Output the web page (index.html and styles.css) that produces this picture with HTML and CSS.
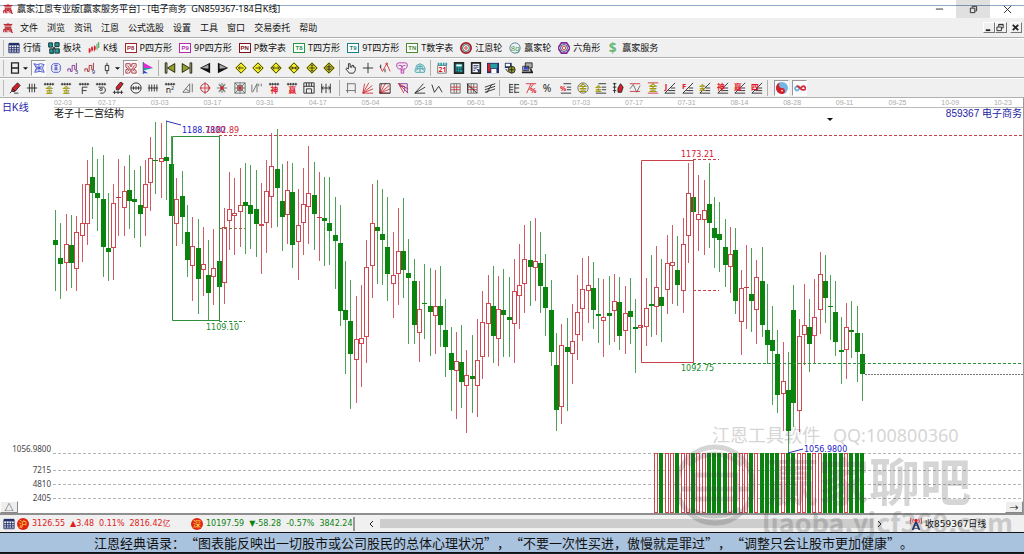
FILE: index.html
```html
<!DOCTYPE html>
<html lang="zh-CN">
<head>
<meta charset="utf-8">
<title>赢家江恩专业版</title>
<link rel="stylesheet" href="styles.css">
</head>
<body>
<svg class="defs" aria-hidden="true">
  <symbol id="logo" viewBox="0 0 14 14"><g class="red logo-lines"><path d="M1 2h12M7 0v2M2 4h10M3 6h8v2H3zM1 13V9h3v4M5.500 13V9h3v3M10 13V9h2v4h2M2 11h2"/></g></symbol>
  <symbol id="table" viewBox="0 0 14 14"><path class="f-white" d="M1 2h12v10H1z"/><path class="f-navy" d="M1 1h12v3H1z"/><path class="navy" d="M1 2v10.500h12V2M1 6.500h12M1 8.500h12M1 10.500h12M4 4v8M7 4v8M10 4v8"/></symbol>
  <symbol id="blocks" viewBox="0 0 14 14"><path class="f-teal" d="M0 1h6v5H0zM8 0h5v6H8zM2 8h5v6H2zM8 8h6v5H8z"/><path class="line" d="M1 1h4v5H1zM8 1h5v4H8zM2 8h4v5H2zM8 8h5v5H8zM6 6l3 3M9 5L5 9"/></symbol>
  <symbol id="kline" viewBox="0 0 14 14"><path class="red" d="M1.500 7v6M4.500 5v6M7.500 4v7"/><path class="f-red" d="M1 8h2v4H1zM4 6h2v4H4zM7 5h2v4H7z"/><path class="green" d="M10.500 2v7M12.500 0v7"/></symbol>
  <symbol id="wheel" viewBox="0 0 14 14"><circle class="maroon thick" cx="7" cy="7" r="6"/><circle class="darkgreen" cx="7" cy="7" r="4"/><circle class="red" cx="7" cy="7" r="1.500"/></symbol>
  <symbol id="wheel8" viewBox="0 0 14 14"><circle class="slate" cx="7" cy="7" r="6"/><text class="t-green" x="2" y="10" font-size="9">8g</text></symbol>
  <symbol id="hex" viewBox="0 0 14 14"><path class="purple thick" d="M4 1h6l4 6-4 6H4L0 7z"/><circle class="navy" cx="7" cy="7" r="4"/><circle class="red" cx="7" cy="7" r="2"/></symbol>
  <symbol id="dollar" viewBox="0 0 14 14"><text class="t-money" x="2" y="13" font-size="16">$</text></symbol>

  <symbol id="caret" viewBox="0 0 6 14"><path class="f-black" d="M0 6h6L3 9z"/></symbol>
  <symbol id="day" viewBox="0 0 14 14"><path class="line day-lines" d="M3 1h8v12H3zM3 7h8"/></symbol>
  <symbol id="web" viewBox="0 0 14 14"><path class="blue" d="M1 2l4 1 4-1 4 1-2 4 2 5-5-1-6 1 2-5zM3 4l8 6M11 4l-8 6M4 7h6M7 3v8"/></symbol>
  <symbol id="clip" viewBox="0 0 14 14"><path class="blue" d="M4 2h6l2 2v6l-2 2H4l-2-2V4zM5 4h4M5 7h4M5 9h4M7 4v5"/></symbol>
  <symbol id="step3" viewBox="0 0 14 14"><path class="purple" d="M1 11V8h3v3h2V4h3v5h2V1"/><text class="t-navy" x="9" y="14" font-size="7">3</text></symbol>
  <symbol id="step9" viewBox="0 0 14 14"><path class="maroon" d="M1 11V8h3v3h2V4h3v5h2V1"/><text class="t-navy" x="9" y="14" font-size="7">9</text></symbol>
  <symbol id="bar" viewBox="0 0 14 14"><path class="line" d="M5 4h4v6H5zM7 1v3M7 10v4"/></symbol>
  <symbol id="knot" viewBox="0 0 14 14"><path class="maroon" d="M1 2h5v3h2V2h5v4l-3 2 3 2v3H8V9H6v3l-2 1H1V9l3-1-3-2zM3 4l2 3M11 4L9 7M3 11l3-4M11 11L8 7"/></symbol>
  <symbol id="flag" viewBox="0 0 14 14"><path class="f-magenta" d="M2 1v6h11z"/><path class="f-teal" d="M2 7h11L2 10z"/><path class="f-blue" d="M2 10l5 3H2z"/><path class="navy" d="M1.500 0v14"/></symbol>
  <symbol id="first" viewBox="0 0 14 14"><path class="f-olive" d="M13 1v12L4 7zM1 1h2v12H1z"/><path class="line" d="M12.500 2v10L4 7zM1.500 1v12h2V1z"/></symbol>
  <symbol id="last" viewBox="0 0 14 14"><path class="f-olive" d="M1 1v12l9-6zM11 1h2v12h-2z"/><path class="line" d="M1.500 2v10L10 7zM10.500 1v12h2V1z"/></symbol>
  <symbol id="prev" viewBox="0 0 14 14"><path class="f-black" d="M13 1v12L1 7z"/><path class="f-gray" d="M11 3v5L3 7z"/></symbol>
  <symbol id="next" viewBox="0 0 14 14"><path class="f-black" d="M1 1v12l12-6z"/><path class="f-gray" d="M3 3v5l8-1z"/></symbol>
  <symbol id="dia" viewBox="0 0 14 14"><path class="f-yellow" d="M7 0l7 7-7 7-7-7z"/><path class="line" d="M7 1l6 6-6 6-6-6z"/></symbol>
  <symbol id="d1" viewBox="0 0 14 14"><use href="#dia"/><path class="line" d="M4 7h6M6 5L4 7l2 2"/></symbol>
  <symbol id="d2" viewBox="0 0 14 14"><use href="#dia"/><path class="line" d="M4 7h6M8 5l2 2-2 2"/></symbol>
  <symbol id="d3" viewBox="0 0 14 14"><use href="#dia"/><path class="line" d="M3 7h8M5 5L3 7l2 2M9 5l2 2-2 2"/></symbol>
  <symbol id="d4" viewBox="0 0 14 14"><use href="#dia"/><path class="line" d="M2 7h10M4 5l2 2-2 2M10 5L8 7l2 2"/></symbol>
  <symbol id="d5" viewBox="0 0 14 14"><use href="#dia"/><path class="line" d="M7 3v8M3 7h8M5 5l2-2 2 2M5 9l2 2 2-2"/></symbol>
  <symbol id="d6" viewBox="0 0 14 14"><use href="#dia"/><path class="line" d="M7 2v10M4 5h6M4 9h6M2 7h10"/></symbol>
  <symbol id="hand" viewBox="0 0 14 14"><path class="line" d="M5 13L1 8l1-1 2 1V2h2v4h2V4h2v2h2v4l-2 3z"/></symbol>
  <symbol id="cross" viewBox="0 0 14 14"><path class="line" d="M7 1v12M1 7h12"/></symbol>
  <symbol id="vpath" viewBox="0 0 14 14"><path class="red" d="M1 5l3 6 5-9 4 9"/><path class="line" d="M2 3v4M7 8v4"/><circle class="red" cx="9" cy="2" r="1"/></symbol>
  <symbol id="brain" viewBox="0 0 14 14"><path class="magenta" d="M1 2l2-1h8l2 1v4l-2 2H9v5H6V8H3L1 6zM3 4h3l1 2 2-2h2M7 4v7"/></symbol>
  <symbol id="cloud" viewBox="0 0 14 14"><path class="teal" d="M2 8l1-4 4-2 4 2 2 4-1 4H2L1 10zM4 5h6M3 8h9M7 3v9M9 5l2 5M5 5l-2 5"/></symbol>
  <symbol id="cal" viewBox="0 0 14 14"><path class="f-white" d="M2 4h10v9H2z"/><path class="gray" d="M2 4h10v9H2z"/><path class="teal thick" d="M3 1v3M6 1v3M9 1v3M12 1v3"/><text class="t-red" x="3" y="12" font-size="8">21</text></symbol>
  <symbol id="calc" viewBox="0 0 14 14"><path class="f-teal" d="M1 0h12v14H1z"/><path class="line thick" d="M2 1h10v12H2z"/><path class="f-white" d="M4 3h6v2H4z"/><path class="line" d="M4 7h2M7 7h1M9 7h2M4 9h2M7 9h1M9 9h2M4 11h2M7 11h1"/></symbol>
  <symbol id="note" viewBox="0 0 14 14"><path class="f-white" d="M1 0h12v14H1z"/><path class="line thick" d="M2 1h10v12H2z"/><path class="navy" d="M4 4h6M4 6h6M4 8h4M4 10h2"/><path class="f-navy" d="M8 8l4 1-2 4z"/></symbol>
  <symbol id="disk" viewBox="0 0 14 14"><path class="f-navy" d="M0 1h14v12H0z"/><path class="f-red" d="M1 2h3v9H1z"/><path class="f-white" d="M5 8h6v5H5z"/><path class="f-teal" d="M4 2h8v5H4z"/></symbol>
  <symbol id="globe" viewBox="0 0 14 14"><path class="f-navy" d="M1 1h8v6H1z"/><path class="f-white" d="M2 2h5v3H2z"/><circle class="f-olive" cx="9" cy="9" r="4"/><circle class="line" cx="9" cy="9" r="4"/><path class="line" d="M2 8l3 4M6 9h6M9 5v8"/></symbol>
  <symbol id="pc" viewBox="0 0 14 14"><path class="f-gray" d="M5 1h8v6H5z"/><path class="line" d="M5 1h8v6H5zM2 5h7v5H2z"/><path class="f-blue" d="M3 6h5v3H3z"/><path class="line thick" d="M1 12h8M11 8l2 4h-4"/></symbol>

  <symbol id="pen" viewBox="0 0 14 14"><path class="f-red" d="M10 1l3 3-6 7H3l1-4z"/><path class="line" d="M10 1l3 3-6 7H3l1-4zM3 11l-2 2M6 13h5M4 8l3 2"/></symbol>
  <symbol id="tally3" viewBox="0 0 14 14"><path class="line" d="M1 7h12M4 2v10M7 2v10M10 2v10"/></symbol>
  <symbol id="comb" viewBox="0 0 14 14"><path class="line" d="M1 2.500h12M2.500 1v3M5.500 1v3M8.500 1v3M11.500 1v3"/></symbol>
  <symbol id="combjin" viewBox="0 0 14 14"><use href="#comb"/><text class="t-olive" x="3" y="13" font-size="9">金</text></symbol>
  <symbol id="combf" viewBox="0 0 14 14"><use href="#comb"/><path class="line" d="M5 14V6h6M5 10h5"/></symbol>
  <symbol id="spiral" viewBox="0 0 14 14"><use href="#comb"/><path class="line" d="M4 6h6q3 1 2 5-2 3-6 2M9 8q-4-1-4 1 2 2 4 0"/></symbol>
  <symbol id="penline" viewBox="0 0 14 14"><path class="f-red" d="M10 0l3 2-5 7H5V6z"/><path class="line" d="M10 0l3 2-5 7H5V6zM1 12h12M3 10v4M7 10v4M11 10v4"/></symbol>
  <symbol id="circ" viewBox="0 0 14 14"><circle class="line" cx="7" cy="7" r="6"/><path class="line" d="M1 7h12M4 5v4M7 5v4M10 5v4"/></symbol>
  <symbol id="tally4" viewBox="0 0 14 14"><path class="line" d="M1 7h12M2.500 3v8M5.500 3v8M8.500 3v8M11.500 3v8"/></symbol>
  <symbol id="nsq" viewBox="0 0 14 14"><use href="#comb"/><text class="t-black" x="2" y="13" font-size="10">n²</text></symbol>
  <symbol id="angle" viewBox="0 0 14 14"><path class="gray" d="M1 12L9 2v10zM4 8l5 3M12 2v10"/></symbol>
  <symbol id="target" viewBox="0 0 14 14"><circle class="maroon" cx="7" cy="7" r="5"/><path class="red" d="M7 0v14M1 7h12M10 5l3 2-3 2"/></symbol>
  <symbol id="star" viewBox="0 0 14 14"><path class="gray" d="M7 1v12M1 7h12M3 3l8 8M11 3l-8 8M4 2l6 10M10 2L4 12"/><circle class="f-red" cx="7" cy="7" r="2"/></symbol>
  <symbol id="starbox" viewBox="0 0 14 14"><path class="gray" d="M1 1h12v12H1zM1 1l12 12M13 1L1 13M7 1v12M1 7h12M4 4h6v6H4z"/><circle class="f-red" cx="7" cy="7" r="2"/></symbol>
  <symbol id="nq" viewBox="0 0 14 14"><path class="gray" d="M1 3v9M2 12L7 2v10M9 2v3M12 2v3"/></symbol>
  <symbol id="combshen" viewBox="0 0 14 14"><use href="#comb"/><text class="t-red" x="3" y="13" font-size="9">神</text></symbol>
  <symbol id="combying" viewBox="0 0 14 14"><use href="#comb"/><text class="t-red" x="3" y="13" font-size="9">赢</text></symbol>
  <symbol id="film" viewBox="0 0 14 14"><path class="line" d="M1 1h12v12H1zM1 5h12M4 1v4M7 1v4M10 1v4M4 8h6v5M4 8v5"/></symbol>
  <symbol id="span" viewBox="0 0 14 14"><path class="line" d="M2 2v11M7 2v11M12 2v11M2 7h10M4 5l-2 2 2 2M10 5l2 2-2 2"/></symbol>

  <symbol id="brk" viewBox="0 0 14 14"><path class="gray" d="M3 1v9h9V2H3M1 10h2v3M12 10v3"/></symbol>
  <symbol id="fan" viewBox="0 0 14 14"><path class="red" d="M1 13L3 2M1 13L8 1M1 13L12 4M1 13l12-5M1 13h12"/></symbol>
  <symbol id="fanbox" viewBox="0 0 14 14"><use href="#fan"/><path class="line" d="M1 2h12v11H1z"/></symbol>
  <symbol id="fanbox2" viewBox="0 0 14 14"><path class="red" d="M2 2l11 11M2 2l6 11M2 2l11 6"/><path class="purple" d="M1 2h11v11M3 5h6v6"/></symbol>
  <symbol id="rays" viewBox="0 0 14 14"><path class="line" d="M1 13L11 2M1 13l12-7M1 13h12"/></symbol>
  <symbol id="zig" viewBox="0 0 14 14"><path class="line" d="M1 3l3 9 5-7 4 7"/></symbol>
  <symbol id="grid" viewBox="0 0 14 14"><path class="gray" d="M2 2h11v11H2zM6 2v11M9 2v11"/><path class="red" d="M2 6h11M2 9h11"/></symbol>
  <symbol id="griddiag" viewBox="0 0 14 14"><use href="#grid"/><path class="line" d="M1 2l12 11M2 2v11"/></symbol>
  <symbol id="para" viewBox="0 0 14 14"><path class="line" d="M1 6l12-4M1 9l12-4M1 12l12-4M3 13L9 3"/></symbol>

  <symbol id="ladder" viewBox="0 0 14 14"><path class="line" d="M2 2v11M2 3h4M2 6h4M2 9h4M2 12h4M8 2v11M8 3h5M8 7h5M8 12h5"/></symbol>
  <symbol id="pct7" viewBox="0 0 14 14"><path class="red" d="M1 2h12M2 13L7 2M10 2L5 9"/><text class="t-red" x="6" y="13" font-size="8">%</text></symbol>
  <symbol id="pct" viewBox="0 0 14 14"><text class="t-black" x="1" y="12" font-size="12">%</text></symbol>
  <symbol id="lines" viewBox="0 0 14 14"><path class="line" d="M4 2h9M8 6h5M8 9h5M1 13h12"/></symbol>
  <symbol id="pctl" viewBox="0 0 14 14"><use href="#lines"/><text class="t-red" x="0" y="11" font-size="8">%</text></symbol>
  <symbol id="jinc" viewBox="0 0 14 14"><circle class="gray" cx="7" cy="7" r="6"/><text class="t-olive" x="2" y="11" font-size="10">金</text></symbol>
  <symbol id="jinl" viewBox="0 0 14 14"><use href="#lines"/><text class="t-olive" x="0" y="11" font-size="8">金</text></symbol>
  <symbol id="penscale" viewBox="0 0 14 14"><path class="f-red" d="M10 2l3 4-2 6H7V7z"/><path class="line" d="M3 1v12M1 2h4M1 6h4M1 10h4M10 2l3 4-2 6H7V7z"/></symbol>
  <symbol id="wave" viewBox="0 0 14 14"><path class="red" d="M1 2h12M1 11h12"/><path class="gray" d="M1 8l4-5 4 9 4-8"/></symbol>
  <symbol id="jinr" viewBox="0 0 14 14"><path class="red" d="M1 1h12M1 13h12"/><text class="t-olive" x="2" y="11" font-size="10">金</text></symbol>
  <symbol id="ang" viewBox="0 0 14 14"><path class="line" d="M1 13L13 1M1 13h12M5 10h8M8 7h5"/></symbol>
  <symbol id="angj" viewBox="0 0 14 14"><use href="#ang"/><text class="t-red" x="1" y="8" font-size="9">J</text></symbol>
  <symbol id="angf" viewBox="0 0 14 14"><use href="#ang"/><text class="t-red" x="0" y="8" font-size="9">F</text></symbol>
  <symbol id="angjin" viewBox="0 0 14 14"><use href="#ang"/><text class="t-olive" x="0" y="9" font-size="8">金</text></symbol>
  <symbol id="angshen" viewBox="0 0 14 14"><use href="#ang"/><text class="t-red" x="0" y="9" font-size="9">神</text></symbol>
  <symbol id="angying" viewBox="0 0 14 14"><use href="#ang"/><text class="t-red" x="0" y="9" font-size="9">赢</text></symbol>
  <symbol id="angsi" viewBox="0 0 14 14"><use href="#ang"/><text class="t-red" x="0" y="9" font-size="9">四</text></symbol>
  <symbol id="yin" viewBox="0 0 14 14"><circle class="f-sky" cx="7" cy="7" r="7"/><path class="f-red" d="M7 0a7 7 0 0 0 0 14 3 3 0 0 0 0-7 3 3 0 0 1 0-7z"/><circle class="f-white" cx="7" cy="10" r="1"/></symbol>
  <symbol id="inf" viewBox="0 0 14 14"><path class="sky thick" d="M7 8Q4 4 2 6t1 4q2 0 4-3"/><path class="red thick" d="M3 5q2-1 4 2t5 2 0-4q-2-1-4 2"/></symbol>
  <symbol id="tower" viewBox="0 0 14 14"><path class="navy thick" d="M7 4l-4 10M7 4l4 10"/><path class="navy" d="M5 9h4M4 12h6"/><path class="red" d="M4 1q-2 3 0 5M10 1q2 3 0 5M1 0q-1 4 0 7M13 0q1 4 0 7"/><circle class="f-red" cx="7" cy="3" r="2"/></symbol>
</svg>

<div class="app">
  <header class="titlebar">
    <svg class="app-icon"><use href="#logo"/></svg>
    <h1 class="title">赢家江恩专业版[赢家服务平台] - [电子商务&nbsp; GN859367-184日K线]</h1>
    <div class="win-buttons">
      <button class="win" aria-label="最小化"><svg viewBox="0 0 10 10"><path class="line" d="M1 4.500h8"/></svg></button>
      <button class="win win-on" aria-label="还原"><svg viewBox="0 0 10 10"><path class="line" d="M1.500 3.500h5v5h-5zM3.500 3V1.500h5v5H7"/></svg></button>
      <button class="win" aria-label="关闭"><svg viewBox="0 0 10 10"><path class="line" d="M1 1l8 8M9 1L1 9"/></svg></button>
    </div>
  </header>

  <nav class="menubar">
    <svg class="app-icon"><use href="#logo"/></svg>
    <button class="menu">文件</button><button class="menu">浏览</button><button class="menu">资讯</button><button class="menu">江恩</button><button class="menu">公式选股</button><button class="menu">设置</button><button class="menu">工具</button><button class="menu">窗口</button><button class="menu">交易委托</button><button class="menu">帮助</button>
    <div class="mdi">
      <button class="mdi-btn" aria-label="最小化子窗口"><svg viewBox="0 0 10 10"><path class="line thick" d="M2 8h5"/></svg></button>
      <button class="mdi-btn" aria-label="还原子窗口"><svg viewBox="0 0 10 10"><path class="line" d="M1 4.500h5v4H1zM3 4V1.500h5v4H6M3 2h5"/></svg></button>
      <button class="mdi-btn mdi-close" aria-label="关闭子窗口"><svg viewBox="0 0 10 10"><path class="line thick" d="M2 2l6 6M8 2L2 8"/></svg></button>
    </div>
  </nav>

  <div class="toolbar labelled">
    <button class="entry"><svg><use href="#table"/></svg>行情</button>
    <button class="entry"><svg><use href="#blocks"/></svg>板块</button>
    <button class="entry"><svg><use href="#kline"/></svg>K线</button>
    <button class="entry"><span class="tag tag-p8">P8</span>P四方形</button>
    <button class="entry"><span class="tag tag-p9">P9</span>9P四方形</button>
    <button class="entry"><span class="tag tag-pn">PN</span>P数字表</button>
    <button class="entry"><span class="tag tag-t8">T8</span>T四方形</button>
    <button class="entry"><span class="tag tag-t9">T9</span>9T四方形</button>
    <button class="entry"><span class="tag tag-tn">TN</span>T数字表</button>
    <button class="entry"><svg><use href="#wheel"/></svg>江恩轮</button>
    <button class="entry"><svg><use href="#wheel8"/></svg>赢家轮</button>
    <button class="entry"><svg><use href="#hex"/></svg>六角形</button>
    <button class="entry"><svg><use href="#dollar"/></svg>赢家服务</button>
  </div>

  <div class="toolbar">
    <div class="group g-view">
      <button class="tool with-caret" aria-label="周期"><svg><use href="#day"/></svg><svg class="caret"><use href="#caret"/></svg></button>
      <button class="tool pressed" aria-label="网"><svg><use href="#web"/></svg></button>
      <button class="tool" aria-label="信息"><svg><use href="#clip"/></svg></button>
      <button class="tool" aria-label="三段"><svg><use href="#step3"/></svg></button>
      <button class="tool" aria-label="九段"><svg><use href="#step9"/></svg></button>
      <button class="tool with-caret" aria-label="K线样式"><svg><use href="#bar"/></svg><svg class="caret"><use href="#caret"/></svg></button>
      <button class="tool pressed" aria-label="结构"><svg><use href="#knot"/></svg></button>
      <button class="tool" aria-label="旗"><svg><use href="#flag"/></svg></button>
    </div>
    <div class="group g-move">
      <button class="tool" aria-label="最前"><svg><use href="#first"/></svg></button>
      <button class="tool" aria-label="最后"><svg><use href="#last"/></svg></button>
      <button class="tool" aria-label="向前"><svg><use href="#prev"/></svg></button>
      <button class="tool" aria-label="向后"><svg><use href="#next"/></svg></button>
      <button class="tool" aria-label="左移"><svg><use href="#d1"/></svg></button>
      <button class="tool" aria-label="右移"><svg><use href="#d2"/></svg></button>
      <button class="tool" aria-label="放宽"><svg><use href="#d3"/></svg></button>
      <button class="tool" aria-label="收窄"><svg><use href="#d4"/></svg></button>
      <button class="tool" aria-label="放大"><svg><use href="#d5"/></svg></button>
      <button class="tool" aria-label="缩小"><svg><use href="#d6"/></svg></button>
    </div>
    <div class="group g-hand">
      <button class="tool" aria-label="拖动"><svg><use href="#hand"/></svg></button>
      <button class="tool" aria-label="十字"><svg><use href="#cross"/></svg></button>
      <button class="tool" aria-label="波段"><svg><use href="#vpath"/></svg></button>
      <button class="tool" aria-label="智能"><svg><use href="#brain"/></svg></button>
      <button class="tool" aria-label="云"><svg><use href="#cloud"/></svg></button>
    </div>
    <div class="group g-util">
      <button class="tool" aria-label="日历"><svg><use href="#cal"/></svg></button>
      <button class="tool" aria-label="计算器"><svg><use href="#calc"/></svg></button>
      <button class="tool" aria-label="笔记"><svg><use href="#note"/></svg></button>
      <button class="tool" aria-label="保存"><svg><use href="#disk"/></svg></button>
      <button class="tool" aria-label="网络"><svg><use href="#globe"/></svg></button>
      <button class="tool" aria-label="电脑"><svg><use href="#pc"/></svg></button>
    </div>
  </div>

  <div class="toolbar">
    <div class="group g-draw">
      <button class="tool" aria-label="画笔"><svg><use href="#pen"/></svg></button>
      <button class="tool" aria-label="等分"><svg><use href="#tally3"/></svg></button>
      <button class="tool" aria-label="金一"><svg><use href="#combjin"/></svg></button>
      <button class="tool" aria-label="金二"><svg><use href="#combjin"/></svg></button>
      <button class="tool" aria-label="斐波"><svg><use href="#combf"/></svg></button>
      <button class="tool" aria-label="螺旋"><svg><use href="#spiral"/></svg></button>
      <button class="tool" aria-label="笔线"><svg><use href="#penline"/></svg></button>
      <button class="tool" aria-label="圆"><svg><use href="#circ"/></svg></button>
      <button class="tool" aria-label="刻度"><svg><use href="#tally4"/></svg></button>
      <button class="tool" aria-label="平方"><svg><use href="#nsq"/></svg></button>
      <button class="tool" aria-label="角"><svg><use href="#angle"/></svg></button>
      <button class="tool" aria-label="靶"><svg><use href="#target"/></svg></button>
      <button class="tool" aria-label="星"><svg><use href="#star"/></svg></button>
      <button class="tool" aria-label="星盒"><svg><use href="#starbox"/></svg></button>
      <button class="tool" aria-label="折"><svg><use href="#nq"/></svg></button>
      <button class="tool" aria-label="神"><svg><use href="#combshen"/></svg></button>
      <button class="tool" aria-label="赢"><svg><use href="#combying"/></svg></button>
      <button class="tool" aria-label="框"><svg><use href="#film"/></svg></button>
      <button class="tool" aria-label="间距"><svg><use href="#span"/></svg></button>
    </div>
    <div class="group g-fan">
      <button class="tool" aria-label="括"><svg><use href="#brk"/></svg></button>
      <button class="tool" aria-label="扇"><svg><use href="#fan"/></svg></button>
      <button class="tool" aria-label="扇盒"><svg><use href="#fanbox"/></svg></button>
      <button class="tool" aria-label="下扇盒"><svg><use href="#fanbox2"/></svg></button>
      <button class="tool" aria-label="射线"><svg><use href="#rays"/></svg></button>
      <button class="tool" aria-label="折线"><svg><use href="#zig"/></svg></button>
      <button class="tool" aria-label="格"><svg><use href="#grid"/></svg></button>
      <button class="tool" aria-label="斜格"><svg><use href="#griddiag"/></svg></button>
      <button class="tool" aria-label="平行"><svg><use href="#para"/></svg></button>
    </div>
    <div class="group g-ratio">
      <button class="tool" aria-label="梯"><svg><use href="#ladder"/></svg></button>
      <button class="tool" aria-label="斜比"><svg><use href="#pct7"/></svg></button>
      <button class="tool" aria-label="百分比"><svg><use href="#pct"/></svg></button>
      <button class="tool" aria-label="比线"><svg><use href="#pctl"/></svg></button>
      <button class="tool" aria-label="金圆"><svg><use href="#jinc"/></svg></button>
      <button class="tool" aria-label="金线"><svg><use href="#jinl"/></svg></button>
      <button class="tool" aria-label="笔尺"><svg><use href="#penscale"/></svg></button>
      <button class="tool" aria-label="波"><svg><use href="#wave"/></svg></button>
      <button class="tool" aria-label="金"><svg><use href="#jinr"/></svg></button>
      <button class="tool" aria-label="江角"><svg><use href="#angj"/></svg></button>
      <button class="tool" aria-label="F角"><svg><use href="#angf"/></svg></button>
      <button class="tool" aria-label="金角"><svg><use href="#angjin"/></svg></button>
      <button class="tool" aria-label="神角"><svg><use href="#angshen"/></svg></button>
      <button class="tool" aria-label="赢角"><svg><use href="#angying"/></svg></button>
      <button class="tool" aria-label="四角"><svg><use href="#angsi"/></svg></button>
    </div>
    <div class="group g-mode">
      <button class="tool pressed" aria-label="阴阳"><svg><use href="#yin"/></svg></button>
      <button class="tool pressed" aria-label="无限"><svg><use href="#inf"/></svg></button>
    </div>
  </div>

  <main class="workspace">
    <div class="dates"><span>02-03</span><span>02-17</span><span>03-03</span><span>03-17</span><span>03-31</span><span>04-17</span><span>05-04</span><span>05-18</span><span>06-01</span><span>06-15</span><span>07-03</span><span>07-17</span><span>07-31</span><span>08-14</span><span>08-28</span><span>09-11</span><span>09-25</span><span>10-09</span><span>10-23</span></div>
    <svg class="chart" viewBox="0 107 1023 406" role="img" aria-label="日K线">
      <path class="axis" d="M54 107.500h969"/>
      <path class="grid-line" d="M53 453.500h970M53 470.500h970M53 484.500h970M53 498.500h970"/>
      <g id="volume"></g>
      <g id="candles"></g>
      <path class="up" d="M641.500 160.500h52v202h-52z"/>
      <path class="down" d="M172.500 136.500h47v184h-47z"/>
      <path class="up dash" d="M219 135.500h804"/>
      <path class="up dash" d="M693 159.500h26M693 290.500h26"/>
      <path class="mid dash" d="M219 228.500h26"/>
      <path class="down dash" d="M219 321.500h26"/>
      <path class="down dash" d="M693 363.500h330"/>
      <path class="last-price" d="M865 374.500h158"/>
      <path class="pointer" d="M166 121l15 4M788 453l15-4"/>
      <path class="f-black" d="M827 118h6l-3 3z"/>
      <text class="label-blue" x="182" y="133">1188.7800</text>
      <text class="label-red" x="206" y="133">1182.89</text>
      <text class="label-green" x="206" y="330">1109.10</text>
      <text class="label-red" x="681" y="157">1173.21</text>
      <text class="label-green" x="681" y="371">1092.75</text>
      <text class="label-blue" x="804" y="452">1056.9800</text>
      <text class="heading navy-text" x="2" y="111">日K线</text>
      <text class="heading" x="54" y="117">老子十二宫结构</text>
      <text class="heading navy-text end" x="1022" y="117">859367 电子商务</text>
      <text class="scale" x="51" y="452">1056.9800</text>
      <text class="scale" x="51" y="473">7215</text>
      <text class="scale" x="51" y="487">4810</text>
      <text class="scale" x="51" y="501">2405</text>
    </svg>
    <button class="corner corner-left">△</button>
    <button class="corner corner-right">→</button>
  </main>

  <footer class="status">
    <svg class="status-table"><use href="#table"/></svg>
    <span class="coin">沪</span>
    <span class="quote quote-up"><span>3126.55</span><span>▲3.48</span><span>0.11%</span><span>2816.42亿</span></span>
    <span class="coin">深</span>
    <span class="quote quote-down"><span>10197.59</span><span>▼-58.28</span><span>-0.57%</span><span>3842.24</span></span>
    <div class="scroller">
      <button class="arrow" aria-label="向左"><svg viewBox="0 0 6 8"><path class="line" d="M5 1L2 4l3 3"/></svg></button>
      <div class="thumb"></div>
      <button class="arrow" aria-label="向右"><svg viewBox="0 0 6 8"><path class="line" d="M1 1l3 3-3 3"/></svg></button>
    </div>
    <div class="feed"><svg><use href="#tower"/></svg>收859367日线</div>
  </footer>

  <p class="motto">江恩经典语录：“图表能反映出一切股市或公司股民的总体心理状况”，“不要一次性买进，傲慢就是罪过”，“调整只会让股市更加健康”。</p>

  <svg class="watermark" viewBox="0 -8 360 124" aria-hidden="true">
    <circle class="wm-ring" cx="51" cy="60" r="38"/>
    <path class="wm-ring" d="M24 40q26-22 54 0M17 64h68M30 50h42v24H30zM26 84q24 14 50 0"/>
    <text x="48" y="17" font-size="18">江恩工具软件</text>
    <text x="169" y="17" font-size="18">QQ:100800360</text>
    <text class="wm-bold" x="103" y="76" font-size="51">赢家聊吧</text>
    <text class="wm-bold" x="98" y="108" font-size="27">liaoba.yjcf360.com</text>
  </svg>
</div>
<script src="chart.js"></script>
</body>
</html>
```

FILE: styles.css
```css
* { box-sizing: border-box; }
body {
  margin: 0;
  background: #16202c;
  color: #111;
  font-family: "Noto Sans", "Noto Sans CJK SC", sans-serif;
  font-size: 9px;
  line-height: 12px;
}
button {
  margin: 0;
  padding: 0;
  border: 0;
  background: none;
  color: inherit;
  font: inherit;
  white-space: nowrap;
}
svg { display: block; flex: none; }
.defs { display: none; }
.app { position: relative; min-width: 900px; background: #f0f0f0; }

/* shared drawing colours */
.line, .red, .green, .maroon, .darkgreen, .slate, .purple, .navy, .blue,
.magenta, .teal, .gray, .sky { fill: none; stroke-width: 1; }
.line { stroke: #222; }
.red { stroke: #d42a35; }
.green { stroke: #1b8f2a; }
.maroon { stroke: #a11f2c; }
.darkgreen { stroke: #276048; }
.slate { stroke: #447b9a; }
.purple { stroke: #7d2b94; }
.navy { stroke: #223069; }
.blue { stroke: #3c48c8; }
.magenta { stroke: #b42aa8; }
.teal { stroke: #2c9da5; }
.gray { stroke: #666; }
.sky { stroke: #66aee0; }
.thick { stroke-width: 2; }
.logo-lines { stroke: #b81824; stroke-width: 1.4; }
.day-lines { stroke-width: 1.5; }
.f-white { fill: #fff; }
.f-navy { fill: #223069; }
.f-teal { fill: #23a0a4; }
.f-red { fill: #d81e26; }
.f-black { fill: #111; }
.f-magenta { fill: #e22bd0; }
.f-blue { fill: #3542c4; }
.f-olive { fill: #96a02a; }
.f-gray { fill: #aaa; }
.f-yellow { fill: #f4ee22; }
.f-sky { fill: #75b5e6; }
.t-red { fill: #e0141e; font-weight: bold; }
.t-green { fill: #4a9a58; }
.t-money { fill: #6cb878; font-weight: bold; }
.t-navy { fill: #223069; }
.t-olive { fill: #a09a10; font-weight: bold; }
.t-black { fill: #222; }

/* title and menu */
.titlebar {
  display: flex;
  align-items: center;
  height: 18px;
  padding-left: 3px;
  background: linear-gradient(#8ea9c6, #8ea9c6) 0 5px / 100% 1px no-repeat #fff;
}
.app-icon { width: 10px; height: 10px; margin-right: 4px; }
.title { margin: 0; font-size: 9px; font-weight: normal; }
.win-buttons { display: flex; height: 100%; margin-left: auto; }
.win { display: grid; place-items: center; width: 34px; }
.win svg { width: 9px; height: 9px; }
.win-on { background: rgba(0, 0, 0, 0.12); }
.menubar {
  display: flex;
  align-items: center;
  gap: 9px;
  height: 19px;
  padding-left: 3px;
}
.menubar .app-icon { margin-right: -2px; }
.mdi { display: flex; margin-left: auto; padding-right: 2px; }
.mdi-btn {
  width: 12px;
  height: 11px;
  border: 1px solid;
  border-color: #fff #777 #777 #fff;
}
.mdi-btn svg { width: 9px; height: 9px; }
.mdi-close { margin-left: 3px; }

/* toolbars */
.toolbar {
  display: flex;
  align-items: center;
  height: 20px;
  padding-left: 3px;
  border-top: 1px solid #b0b0b0;
  box-shadow: inset 0 1px #fff;
}
.toolbar::before {
  content: "";
  width: 1px;
  height: 16px;
  background: #bbb;
}
.labelled { gap: 7px; }
.labelled::before { margin-right: -3px; }
.entry { display: flex; align-items: center; gap: 3px; }
.entry svg { width: 12px; height: 12px; }
.tag {
  width: 12px;
  height: 10px;
  border: 1px solid;
  background: #fff;
  font: bold 6px/8px "Liberation Sans", sans-serif;
  text-align: center;
}
.tag-p8 { color: #9c2530; }
.tag-p9 { color: #b22cac; }
.tag-pn { color: #7c1420; }
.tag-t8 { color: #23964a; }
.tag-t9 { color: #187f88; }
.tag-tn { color: #4b8735; }
.group { display: flex; justify-content: space-between; height: 16px; }
.group + .group { border-left: 1px solid #b0b0b0; padding-left: 3px; }
.tool { display: flex; align-items: center; justify-content: center; width: 15px; height: 16px; }
.tool svg { width: 12px; height: 12px; }
.with-caret { width: 22px; gap: 2px; }
.tool .caret { width: 5px; }
.pressed {
  border: 1px solid;
  border-color: #999 #fff #fff #999;
  background: #fafafa;
}
.g-view { width: 151px; padding-left: 3px; }
.g-move { width: 179px; margin-left: 3px; }
.g-move + .g-hand { width: 88px; margin-left: 2px; }
.g-hand + .g-util { width: 105px; margin-left: 3px; }
.g-draw { width: 330px; padding-left: 3px; }
.g-draw + .g-fan { width: 158px; margin-left: 5px; }
.g-fan + .g-ratio { width: 266px; margin-left: 2px; padding-left: 6px; }
.g-ratio + .g-mode { width: 40px; margin-left: 2px; padding-left: 6px; }

/* chart */
.workspace {
  position: relative;
  background: #fff;
  border-top: 1px solid #b0b0b0;
  border-right: 1px solid #999;
  border-bottom: 2px solid #8f8f8f;
}
.dates {
  display: flex;
  height: 9px;
  padding-left: 54px;
  color: #aaa;
  font: 7px/10px "Liberation Sans", sans-serif;
}
.dates span { flex: 1 1 0; }
.dates span:first-child { flex: 0 0 44px; }
.dates span:last-child { flex: 0 0 29px; }
.chart { width: 100%; height: auto; overflow: visible; }
.axis, .grid-line, .up, .down, .mid, .pointer, .last-price { fill: none; }
.axis { stroke: #bbb; }
.grid-line { stroke: #b4b4b4; stroke-dasharray: 3 2; }
.up { stroke: #c8404a; }
.down { stroke: #2f8f3a; }
.mid { stroke: #806c3c; }
.dash { stroke-dasharray: 3 2; }
.last-price { stroke: #777; stroke-dasharray: 2 1; }
.pointer { stroke: #2f2fb4; }
.wick { opacity: 0.85; }
.body-up { fill: #fff; stroke: #d0454f; }
.body-down { fill: #0a840f; }
.body-flat { fill: #c8303c; }
.label-blue, .label-red, .label-green { font: 8px "DejaVu Sans", sans-serif; }
.label-blue { fill: #2222c8; }
.label-red { fill: #d42030; }
.label-green { fill: #188a28; }
.heading { font: 10px "Liberation Sans", "Noto Sans CJK SC", sans-serif; fill: #111; }
.navy-text { fill: #1c1ca4; stroke: none; }
.end { text-anchor: end; }
.scale { font: 8px "Noto Sans", sans-serif; fill: #444; text-anchor: end; }
.corner {
  position: absolute;
  bottom: 0;
  width: 18px;
  height: 12px;
  border: 1px solid;
  border-color: #fff #888 #888 #fff;
  background: #eee;
  font-size: 9px;
  line-height: 9px;
}
.corner-left { left: 0; }
.corner-right { right: 0; }

/* status bar */
.status {
  display: flex;
  align-items: center;
  height: 18px;
  padding-left: 3px;
  border-bottom: 1px solid #111;
}
.status-table { width: 12px; height: 12px; margin-right: 2px; }
.coin {
  width: 12px;
  height: 12px;
  border-radius: 50%;
  background: #e02414;
  color: #ffe94a;
  font-size: 8px;
  line-height: 12px;
  text-align: center;
}
.quote {
  display: flex;
  gap: 5px;
  padding-left: 3px;
  font: 8px/12px "DejaVu Sans", "Noto Sans CJK SC", sans-serif;
  white-space: nowrap;
}
.quote-up { color: #e02020; width: 162px; }
.quote-down { color: #0b820f; width: 150px; }
.scroller {
  display: flex;
  flex: 1;
  align-items: center;
  height: 14px;
  border-left: 2px solid #999;
  padding-left: 13px;
}
.arrow { width: 8px; }
.arrow svg { width: 6px; height: 8px; }
.thumb { flex: 1; height: 9px; margin: 0 4px 0 4px; background: #cdcdcd; }
.feed {
  display: flex;
  align-items: center;
  gap: 3px;
  width: 139px;
  padding-left: 25px;
  font: 9px/12px "DejaVu Sans", "Noto Sans CJK SC", sans-serif;
  white-space: nowrap;
}
.feed svg { width: 12px; height: 12px; }
.motto {
  margin: 0;
  padding-left: 94px;
  background: #a9c3df;
  border-bottom: 1px solid #111;
  font-family: "Noto Sans CJK SC", sans-serif;
  font-size: 13px;
  line-height: 19px;
  text-spacing-trim: space-all;
  white-space: nowrap;
}
.watermark {
  position: absolute;
  right: 0;
  bottom: 12px;
  width: 360px;
  height: 124px;
  opacity: 0.22;
  pointer-events: none;
  fill: #444;
}
.wm-ring { fill: none; stroke: #444; stroke-width: 5; }
.wm-bold { font-family: "Noto Sans CJK SC", sans-serif; font-weight: bold; }
```

FILE: chart.js
```js
// Each row: direction (1 = up, 0 = down), high, body top, body bottom, low.
const bars = [
  [0,210,240,245,291],[0,223,258,264,299],[1,214,244,263,291],[0,215,245,263,288],[1,216,232,269,291],
  [1,184,223,236,262],[1,160,184,224,245],[0,147,177,193,219],[0,159,193,198,231],[0,155,199,247,277],
  [0,193,248,252,281],[1,184,203,248,280],[1,159,197,198,236],[1,166,191,208,236],[0,155,190,201,229],
  [0,170,199,202,238],[0,166,205,214,247],[1,160,184,208,236],[1,137,158,183,211],[0,122,160,161,194],
  [1,123,158,162,198],[0,121,157,161,200],[0,136,164,216,216],[1,178,199,224,246],[0,171,196,217,244],
  [0,205,232,260,277],[1,217,246,266,301],[0,219,248,279,314],[1,227,264,270,296],[0,240,275,293,321],
  [1,229,268,277,305],[0,136,261,287,321],[1,208,227,283,304],[1,172,209,221,250],[1,178,213,216,255],
  [1,168,205,212,247],[0,163,202,206,254],[0,165,205,214,249],[0,170,209,224,257],[1,183,224,226,274],
  [1,160,191,223,253],[1,133,166,197,228],[0,129,169,188,227],[0,164,201,217,251],[1,161,190,215,244],
  [0,163,192,245,268],[1,189,225,242,280],[1,168,204,223,255],[1,146,193,207,244],[0,162,195,214,250],
  [1,172,217,218,261],[0,177,218,221,266],[0,177,223,231,265],[0,197,235,241,289],[0,205,243,311,326],
  [0,261,310,320,374],[0,280,321,354,409],[1,296,339,360,403],[1,285,338,344,387],[1,240,267,337,363],
  [1,184,223,266,298],[0,180,227,231,284],[0,189,234,240,285],[0,197,247,274,301],[1,232,275,284,318],
  [1,208,251,274,305],[0,198,251,270,298],[0,239,273,278,344],[0,259,281,325,344],[1,281,309,333,362],
  [0,264,303,304,339],[0,268,306,312,356],[1,270,306,316,354],[0,266,306,325,347],[0,299,330,347,377],
  [0,327,353,370,411],[1,332,361,371,419],[0,325,362,382,408],[1,350,375,386,433],[0,335,376,379,413],
  [1,319,360,386,417],[1,291,322,357,379],[1,275,303,324,357],[0,266,306,336,363],[1,276,309,339,366],
  [0,269,310,315,357],[0,277,317,320,357],[1,259,291,324,363],[1,244,285,296,329],[1,225,259,284,313],
  [0,221,260,267,306],[1,218,261,268,301],[0,232,263,286,313],[0,254,287,308,336],[0,280,310,352,366],
  [0,333,365,410,431],[1,324,345,407,424],[0,318,347,352,411],[1,304,341,354,384],[1,275,312,335,360],
  [1,258,289,309,341],[1,256,285,291,323],[0,262,288,310,329],[0,278,314,316,343],[1,279,317,321,357],
  [0,276,313,316,345],[1,274,301,311,342],[0,277,302,336,350],[1,286,313,331,354],[0,278,311,317,344],
  [0,299,327,329,373],[1,325,325,328,328],[1,278,308,327,346],[0,255,304,306,337],[1,246,287,307,335],
  [0,259,297,306,342],[1,235,263,290,314],[1,225,262,266,304],[0,236,270,285,306],[1,218,244,291,313],
  [1,163,193,236,263],[0,160,197,212,245],[1,175,214,220,251],[1,180,210,220,255],[0,163,204,223,248],
  [0,197,228,238,268],[0,202,234,240,272],[0,219,247,265,287],[1,227,254,267,293],[0,228,250,301,314],
  [1,270,288,322,355],[1,245,287,288,329],[0,248,294,301,332],[1,260,277,310,344],[0,247,281,325,337],
  [0,284,330,345,364],[0,306,340,351,405],[0,330,354,395,413],[1,342,381,394,431],[0,352,390,431,453],
  [0,285,310,403,427],[1,319,336,411,432],[1,284,325,335,365],[0,299,327,344,372],[1,279,317,336,363],
  [1,252,274,310,334],[0,255,281,298,323],[0,275,306,307,340],[0,281,312,342,356],[0,317,350,352,384],
  [1,303,327,350,379],[0,301,330,332,358],[0,306,333,352,382],[0,333,354,374,401]
];

const FIRST_X = 55.7;
const PITCH = 5.272;
const VOLUME_FROM = 114;
const VOLUME_TOP = 453;
const VOLUME_BOTTOM = 513;

function body(x, top, bottom, up, width) {
  if (up && bottom - top > 1) {
    return `<rect class="body-up" x="${x - 1.5}" y="${top + 0.5}" width="${width - 1}" height="${bottom - top - 1}"/>`;
  }
  return `<rect class="${up ? "body-flat" : "body-down"}" x="${x - 2}" y="${top}" width="${width}" height="${Math.max(1, bottom - top)}"/>`;
}

let candles = "";
let volume = "";
bars.forEach(([up, high, top, bottom, low], i) => {
  const x = Math.floor(FIRST_X + i * PITCH);
  candles += `<path class="wick ${up ? "up" : "down"}" d="M${x + 0.5} ${high}V${low}"/>` + body(x, top, bottom, up, 5);
  if (i >= VOLUME_FROM) volume += body(x, VOLUME_TOP, VOLUME_BOTTOM, up, 4);
});
document.getElementById("candles").innerHTML = candles;
document.getElementById("volume").innerHTML = volume;
```
